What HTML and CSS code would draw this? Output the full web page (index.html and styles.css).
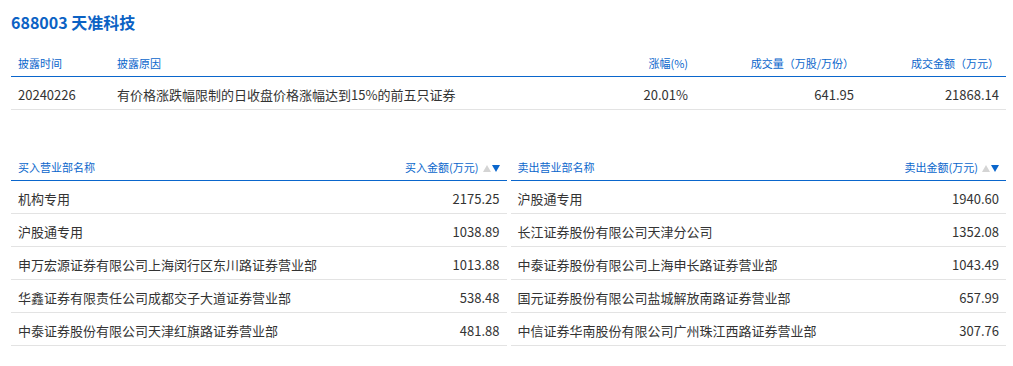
FILE: index.html
```html
<!DOCTYPE html>
<html lang="zh-CN">

<head>
    <meta charset="UTF-8">
    <title>688003 天准科技</title>
    <link rel="stylesheet" href="styles.css">
</head>

<body>
    <div class="page">
        <h1 class="title">688003 天准科技</h1>

        <table class="grid info">
            <colgroup>
                <col style="width: 99px">
                <col>
                <col style="width: 100px">
                <col style="width: 166px">
                <col style="width: 145px">
            </colgroup>
            <thead>
                <tr>
                    <th>披露时间</th>
                    <th>披露原因</th>
                    <th class="num">涨幅(%)</th>
                    <th class="num">成交量（万股/万份）</th>
                    <th class="num">成交金额（万元）</th>
                </tr>
            </thead>
            <tbody>
                <tr>
                    <td>20240226</td>
                    <td>有价格涨跌幅限制的日收盘价格涨幅达到15%的前五只证券</td>
                    <td class="num">20.01%</td>
                    <td class="num">641.95</td>
                    <td class="num">21868.14</td>
                </tr>
            </tbody>
        </table>

        <div class="trades">
            <table class="grid">
                <thead>
                    <tr>
                        <th>买入营业部名称</th>
                        <th class="num">买入金额(万元)<span class="sort"><i class="up"></i><i class="down"></i></span></th>
                    </tr>
                </thead>
                <tbody>
                    <tr><td>机构专用</td><td class="num">2175.25</td></tr>
                    <tr><td>沪股通专用</td><td class="num">1038.89</td></tr>
                    <tr><td>申万宏源证券有限公司上海闵行区东川路证券营业部</td><td class="num">1013.88</td></tr>
                    <tr><td>华鑫证券有限责任公司成都交子大道证券营业部</td><td class="num">538.48</td></tr>
                    <tr><td>中泰证券股份有限公司天津红旗路证券营业部</td><td class="num">481.88</td></tr>
                </tbody>
            </table>

            <table class="grid">
                <thead>
                    <tr>
                        <th>卖出营业部名称</th>
                        <th class="num">卖出金额(万元)<span class="sort"><i class="up"></i><i class="down"></i></span></th>
                    </tr>
                </thead>
                <tbody>
                    <tr><td>沪股通专用</td><td class="num">1940.60</td></tr>
                    <tr><td>长江证券股份有限公司天津分公司</td><td class="num">1352.08</td></tr>
                    <tr><td>中泰证券股份有限公司上海申长路证券营业部</td><td class="num">1043.49</td></tr>
                    <tr><td>国元证券股份有限公司盐城解放南路证券营业部</td><td class="num">657.99</td></tr>
                    <tr><td>中信证券华南股份有限公司广州珠江西路证券营业部</td><td class="num">307.76</td></tr>
                </tbody>
            </table>
        </div>
    </div>
</body>

</html>
```

FILE: styles.css
```css
body {
    margin: 0;
    background: #fff;
    font-family: "Noto Sans CJK SC", "Liberation Sans", sans-serif;
    color: #333;
}

.page {
    padding: 8px 7px 0 11px;
}

.title {
    margin: 0;
    font-size: 16px;
    line-height: 28px;
    font-weight: bold;
    color: #0b62c4;
}

.grid {
    width: 100%;
    border-collapse: collapse;
    table-layout: fixed;
}

.grid th {
    padding: 6px 7px;
    font-size: 11px;
    line-height: 14px;
    font-weight: normal;
    text-align: left;
    color: #0a66cc;
    border-bottom: 1px solid #0a66cc;
    white-space: nowrap;
}

.grid td {
    padding: 10px 7px 6px;
    font-size: 13px;
    line-height: 16px;
    border-bottom: 1px solid #e3e3e3;
    white-space: nowrap;
}

.grid .num {
    text-align: right;
}

.info {
    margin-top: 14px;
}

.trades {
    display: flex;
    gap: 4px;
    margin-top: 44px;
}

.trades .grid th:last-child,
.trades .grid td:last-child {
    width: 130px;
}

/* 排序箭头 */
.sort {
    display: inline-flex;
    gap: 1px;
    margin-left: 4px;
    vertical-align: 0;
}

.sort i {
    width: 0;
    height: 0;
    border-left: 4px solid transparent;
    border-right: 4px solid transparent;
}

.sort .up {
    border-bottom: 7px solid #d4d4d4;
}

.sort .down {
    border-top: 7px solid #0a66cc;
}
```
